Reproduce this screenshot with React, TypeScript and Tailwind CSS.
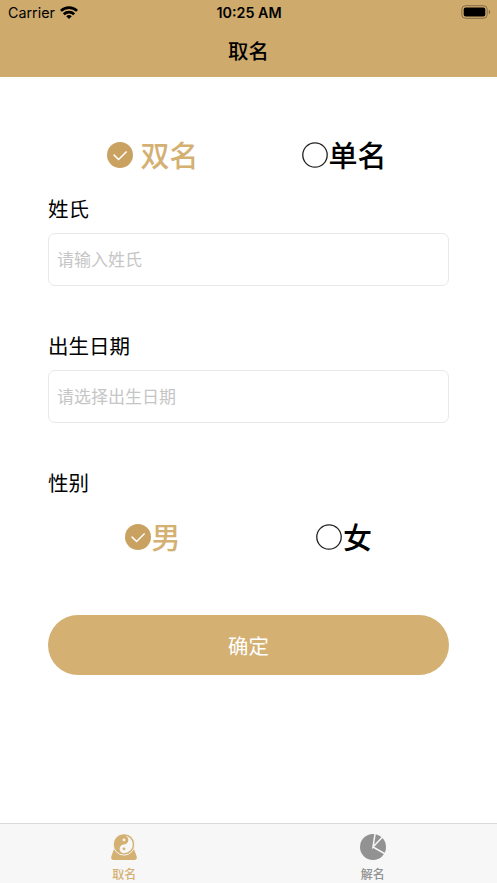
import { useState } from 'react';
import type { ReactNode } from 'react';

interface RadioProps {
  label: string;
  checked: boolean;
  className?: string;
  onSelect: () => void;
}

function Radio({ label, checked, className = '', onSelect }: RadioProps) {
  return (
    <button
      type="button"
      onClick={onSelect}
      className={`flex items-center h-[42px] text-[29px] leading-[42px] font-medium ${
        checked ? 'text-[#d4b073]' : 'text-black'
      } ${className}`}
    >
      <svg className="w-[26px] h-[26px] shrink-0" viewBox="0 0 26 26" fill="none">
        {checked ? (
          <>
            <circle cx="13" cy="13" r="13" fill="#c9a262" />
            <path d="M6.6 12.6l5 4.9 8-8" stroke="#fff" strokeWidth="1.5" />
          </>
        ) : (
          <circle cx="13" cy="13" r="12.2" stroke="#222" strokeWidth="1.3" />
        )}
      </svg>
      <span className="-mt-[2px]">{label}</span>
    </button>
  );
}

function Field({ label, placeholder }: { label: string; placeholder: string }) {
  return (
    <label className="block h-[137px]">
      <span className="block h-[29px] text-[20.5px] leading-[29px]">{label}</span>
      <input
        type="text"
        placeholder={placeholder}
        className="block w-full h-[53px] mt-[10px] px-2 pb-[2px] border border-[#e8e8e8] rounded-[7px] text-[17px] placeholder:text-[#c6c6c6] outline-none"
      />
    </label>
  );
}

function StatusBar() {
  return (
    <div className="flex items-center justify-between h-[25px] font-['Inter',sans-serif] text-[14.3px] leading-[25px]">
      <div className="flex items-center flex-1 pl-2 gap-[5px]">
        <span>Carrier</span>
        <svg className="w-[18px] h-[13px] -mt-[1px]" viewBox="0 0 18 13" fill="none" stroke="#000" strokeWidth="2.7">
          <path d="M.9 4.9a11.6 11.6 0 0 1 16.2 0" />
          <path d="M3.8 8.3a7.5 7.5 0 0 1 10.4 0" />
          <path d="M9 13L6.2 10.3a4 4 0 0 1 5.6 0z" fill="#000" stroke="none" />
        </svg>
      </div>
      <span className="font-semibold mr-[1px]">10:25 AM</span>
      <div className="flex-1 flex justify-end pr-[6px]">
        <svg className="w-[30px] h-[14px] -mt-[1px]" viewBox="0 0 30 14">
          <rect x=".8" y=".7" width="25.4" height="12.6" rx="3.8" fill="none" stroke="#856d46" />
          <rect x="2.7" y="2.5" width="21.6" height="9" rx="2" />
          <path d="M27.8 4.8c1.8.6 1.8 3.8 0 4.4z" fill="#856d46" />
        </svg>
      </div>
    </div>
  );
}

function TaijiIcon() {
  return (
    <svg className="w-[26px] h-[26px]" viewBox="0 0 26 26">
      <path d="M3.2 14.5L.4 22.2C-.4 24.2.6 26 2.5 26h21c1.9 0 2.9-1.8 2.1-3.8l-2.8-7.7z" fill="#d4b073" />
      <circle cx="13" cy="10.4" r="10.7" fill="#d4b073" stroke="#f7f7f7" />
      <path d="M13 1.6a4.4 4.4 0 0 1 0 8.8 4.4 4.4 0 0 0 0 8.8A8.8 8.8 0 0 0 13 1.6z" fill="#f7f7f7" />
      <circle cx="13" cy="5.9" r="1.4" fill="#f7f7f7" />
      <circle cx="13" cy="14.8" r="1.4" fill="#d4b073" />
    </svg>
  );
}

function PieIcon() {
  return (
    <svg className="w-[26px] h-[26px]" viewBox="0 0 26 26">
      <circle cx="13" cy="13" r="13" fill="#929292" />
      <path d="M15.2-1L13 13 23 2.5M13 13l14 8" fill="none" stroke="#f7f7f7" strokeWidth="1.5" />
    </svg>
  );
}

function Tab({ label, active, icon }: { label: string; active?: boolean; icon: ReactNode }) {
  return (
    <button
      type="button"
      className={`flex-1 flex flex-col items-center pt-[10px] text-[12px] leading-[18px] font-medium ${
        active ? 'text-[#d4b073]' : 'text-[#929292]'
      }`}
    >
      {icon}
      <span className="mt-[5px]">{label}</span>
    </button>
  );
}

export default function App() {
  const [nameType, setNameType] = useState('double');
  const [gender, setGender] = useState('male');

  return (
    <div className="flex flex-col h-[883px] bg-white text-black overflow-hidden font-['Noto_Sans_CJK_SC',sans-serif]">
      {/* Header */}
      <header className="h-[77px] shrink-0 bg-[#ceaa6d]">
        <StatusBar />
        <h1 className="text-center text-[20.4px] leading-[50px] font-medium">取名</h1>
      </header>

      {/* Form */}
      <main className="flex-1 px-12 pt-[57px]">
        <div className="flex h-[60px] items-start">
          <Radio
            label="双名"
            checked={nameType === 'double'}
            className="ml-[59px] w-[195px] gap-[7.5px]"
            onSelect={() => setNameType('double')}
          />
          <Radio
            label="单名"
            checked={nameType === 'single'}
            className="gap-[0.5px]"
            onSelect={() => setNameType('single')}
          />
        </div>

        <Field label="姓氏" placeholder="请输入姓氏" />
        <Field label="出生日期" placeholder="请选择出生日期" />

        <div className="h-[29px] text-[20.5px] leading-[29px]">性别</div>
        <div className="flex mt-[19px]">
          <Radio
            label="男"
            checked={gender === 'male'}
            className="ml-[76.5px] w-[191.5px] gap-[1px]"
            onSelect={() => setGender('male')}
          />
          <Radio label="女" checked={gender === 'female'} className="gap-[1px]" onSelect={() => setGender('female')} />
        </div>

        <button
          type="button"
          className="block w-full h-[60px] mt-[57px] rounded-full bg-[#d4b073] text-white text-[20.4px]"
        >
          确定
        </button>
      </main>

      {/* Tab bar */}
      <nav className="flex h-[60px] shrink-0 bg-[#f7f7f7] border-t border-[#d9d9d9]">
        <Tab label="取名" active icon={<TaijiIcon />} />
        <Tab label="解名" icon={<PieIcon />} />
      </nav>
    </div>
  );
}
